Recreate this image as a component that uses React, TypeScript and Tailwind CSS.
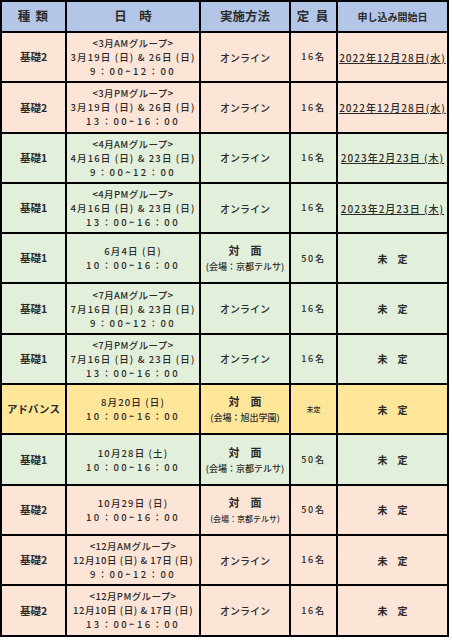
type Tone = "pink" | "green" | "yellow";

type Row = {
  tone: Tone;
  kind: string;
  group?: string;
  date: string;
  time: string;
  method: "online" | "venue";
  venue?: string;
  smallVenue?: boolean;
  cap: string;
  smallCap?: boolean;
  start: string;
  underline?: boolean;
};

const bg: Record<Tone, string> = {
  pink: "bg-[#fce4d6]",
  green: "bg-[#e2efda]",
  yellow: "bg-[#ffe699]",
};

const rows: Row[] = [
  { tone: "pink", kind: "基礎2", group: "<3月AMグループ>", date: "3月19日 (日) & 26日 (日)", time: "9：00~12：00", method: "online", cap: "16名", start: "2022年12月28日(水)", underline: true },
  { tone: "pink", kind: "基礎2", group: "<3月PMグループ>", date: "3月19日 (日) & 26日 (日)", time: "13：00~16：00", method: "online", cap: "16名", start: "2022年12月28日(水)", underline: true },
  { tone: "green", kind: "基礎1", group: "<4月AMグループ>", date: "4月16日 (日) & 23日 (日)", time: "9：00~12：00", method: "online", cap: "16名", start: "2023年2月23日 (木)", underline: true },
  { tone: "green", kind: "基礎1", group: "<4月PMグループ>", date: "4月16日 (日) & 23日 (日)", time: "13：00~16：00", method: "online", cap: "16名", start: "2023年2月23日 (木)", underline: true },
  { tone: "green", kind: "基礎1", date: "6月4日 (日)", time: "10：00~16：00", method: "venue", venue: "(会場：京都テルサ)", cap: "50名", start: "未　定" },
  { tone: "green", kind: "基礎1", group: "<7月AMグループ>", date: "7月16日 (日) & 23日 (日)", time: "9：00~12：00", method: "online", cap: "16名", start: "未　定" },
  { tone: "green", kind: "基礎1", group: "<7月PMグループ>", date: "7月16日 (日) & 23日 (日)", time: "13：00~16：00", method: "online", cap: "16名", start: "未　定" },
  { tone: "yellow", kind: "アドバンス", date: "8月20日 (日)", time: "10：00~16：00", method: "venue", venue: "(会場：旭出学園)", cap: "未定", smallCap: true, start: "未　定" },
  { tone: "green", kind: "基礎1", date: "10月28日 (土)", time: "10：00~16：00", method: "venue", venue: "(会場：京都テルサ)", cap: "50名", start: "未　定" },
  { tone: "pink", kind: "基礎2", date: "10月29日 (日)", time: "10：00~16：00", method: "venue", venue: "(会場：京都テルサ)", smallVenue: true, cap: "50名", start: "未　定" },
  { tone: "pink", kind: "基礎2", group: "<12月AMグループ>", date: "12月10日 (日) & 17日 (日)", time: "9：00~12：00", method: "online", cap: "16名", start: "未　定" },
  { tone: "pink", kind: "基礎2", group: "<12月PMグループ>", date: "12月10日 (日) & 17日 (日)", time: "13：00~16：00", method: "online", cap: "16名", start: "未　定" },
];

const cell = "border-2 border-black text-center align-middle p-0 whitespace-nowrap";

export default function App() {
  return (
    <div className="w-[452px] h-[640px] bg-white font-['Noto_Sans_CJK_JP',sans-serif] text-[#2b2b2b]">
      <table className="table-fixed border-collapse w-[449px]">
        <colgroup>
          <col className="w-[65px]" />
          <col className="w-[134px]" />
          <col className="w-[90px]" />
          <col className="w-[47px]" />
          <col className="w-[111px]" />
        </colgroup>
        <thead>
          <tr className="h-[31px] bg-[#b4c6e7] font-bold">
            <th className={`${cell} text-[12.5px] tracking-[0.1em]`}>種 類</th>
            <th className={`${cell} text-[12.5px]`}>日　時</th>
            <th className={`${cell} text-[12.5px]`}>実施方法</th>
            <th className={`${cell} text-[12.5px] tracking-[0.15em]`}>定 員</th>
            <th className={`${cell} text-[10px]`}>申し込み開始日</th>
          </tr>
        </thead>
        <tbody className="font-medium">
          {rows.map((r, i) => (
            <tr key={i} className={`h-[50.3px] ${bg[r.tone]}`}>
              <td className={`${cell} text-[10.5px] font-semibold`}>{r.kind}</td>
              <td className={`${cell} text-[9.5px] leading-[14px]`}>
                {r.group && <div className="tracking-[0.04em]">{r.group}</div>}
                <div className={r.date.length > 19 ? "tracking-[0.06em]" : "tracking-[0.12em]"}>{r.date}</div>
                <div className="tracking-[0.25em]">{r.time}</div>
              </td>
              <td className={`${cell} text-[10px]`}>
                {r.method === "online" ? (
                  <span>オンライン</span>
                ) : (
                  <div className="flex flex-col items-center gap-[6px]">
                    <span className="text-[11px] leading-[12px] font-semibold">対　面</span>
                    <span className={r.smallVenue ? "text-[8px] leading-[10px]" : "text-[9px] leading-[10px]"}>
                      {r.venue}
                    </span>
                  </div>
                )}
              </td>
              <td className={`${cell} ${r.smallCap ? "text-[7px]" : "text-[9px] tracking-[0.2em]"}`}>{r.cap}</td>
              <td className={`${cell} text-[10px]`}>
                {r.underline ? (
                  <span className="underline tracking-[0.1em]">{r.start}</span>
                ) : (
                  <span className="font-semibold">{r.start}</span>
                )}
              </td>
            </tr>
          ))}
        </tbody>
      </table>
    </div>
  );
}
